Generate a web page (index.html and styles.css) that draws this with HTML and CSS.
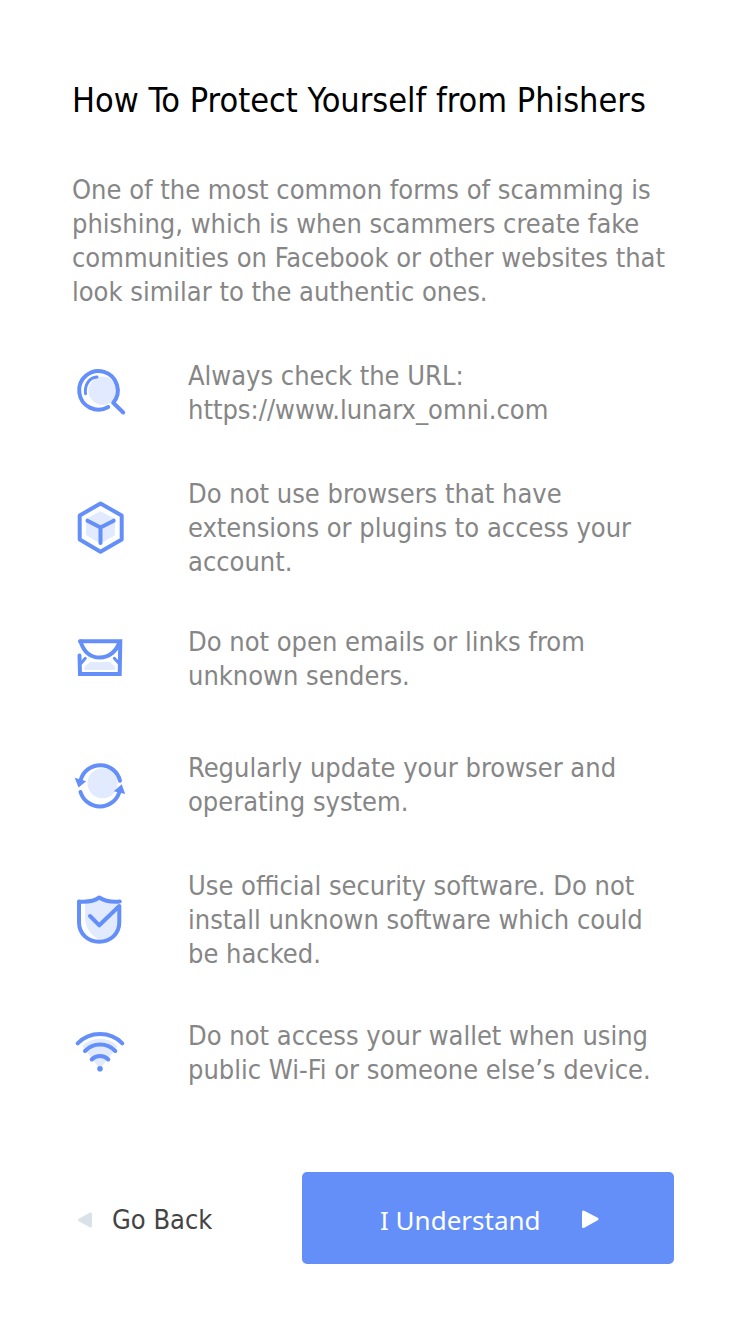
FILE: index.html
```html
<!DOCTYPE html>
<html lang="en">
<head>
<meta charset="utf-8">
<meta name="viewport" content="width=device-width, initial-scale=1">
<title>How To Protect Yourself from Phishers</title>
<link rel="stylesheet" href="styles.css">
</head>
<body>
<main class="page">
  <h1 class="title">How To Protect Yourself from Phishers</h1>
  <p class="intro">One of the most common forms of scamming is phishing, which is when scammers create fake communities on Facebook or other websites that look similar to the authentic ones.</p>

  <ul class="tips">
    <li class="tip">
      <svg class="icon" viewBox="0 0 56 56" aria-hidden="true">
        <circle class="tint" cx="30.7" cy="25.7" r="14.2"/>
        <path d="M36.200 42A19.300 19.300 0 1 1 41.200 37.800M41.200 37.800 51.200 47.500"/>
        <path class="thin" d="M13.500 28.700C12.500 20 17 12.600 25 12"/>
      </svg>
      <p class="tip-text">Always check the URL:<br>https://www.lunarx_omni.com</p>
    </li>
    <li class="tip">
      <svg class="icon" viewBox="0 0 56 56" aria-hidden="true">
        <path class="tint" d="M28.500 11 43 19v16l-14.500 8.700L14 35V19z"/>
        <path d="M28.500 3.500 49.700 15.500v24L28.500 51.800 7.700 39.500v-24z"/>
        <path d="M15.500 20.700 28.500 27.500 41.700 20.700M28.500 27.500V43"/>
      </svg>
      <p class="tip-text">Do not use browsers that have extensions or plugins to access your account.</p>
    </li>
    <li class="tip tip--near">
      <svg class="icon" viewBox="0 0 56 56" aria-hidden="true">
        <path class="tint" d="M18 31h20l5.300 5v3h-31v-3z"/>
        <path class="square" d="M7.500 24.500 8 43H47.700L48.300 10.300H8"/>
        <path d="M8.500 10.500C11.500 20 18 26.500 27.700 26.500S44.500 20 47.500 11"/>
        <path class="thin" d="M13.300 27.300 9.300 32M42.300 27.300 46.700 32"/>
      </svg>
      <p class="tip-text">Do not open emails or links from unknown senders.</p>
    </li>
    <li class="tip tip--far">
      <svg class="icon" viewBox="0 0 56 56" aria-hidden="true">
        <circle class="tint" cx="30.500" cy="26.300" r="15"/>
        <path d="M8.700 23A20.300 20.300 0 0 1 48 23.700M8.500 35A20.300 20.300 0 0 0 47.400 35"/>
        <path class="solid" d="M2.700 20.700 14.200 24.300 6.500 30.500zM49.700 27.300 53.200 37 41.800 34.300z"/>
      </svg>
      <p class="tip-text">Regularly update your browser and operating system.</p>
    </li>
    <li class="tip">
      <svg class="icon" viewBox="0 0 56 56" aria-hidden="true">
        <path class="tint" d="M13 11 28 6l19 5v20c0 10-8 17-18 18C18 43 13.500 36 13 26z"/>
        <path d="M47.800 9.500C40 10.200 33 9.200 27.300 5.500 22 9.200 15 10.200 7 9.500V30C7 42 16 49.700 27.200 49.700S47.300 42 47.300 30V14L27.300 33.300 18 24"/>
      </svg>
      <p class="tip-text">Use official security software. Do not install unknown software which could be hacked.</p>
    </li>
    <li class="tip">
      <svg class="icon" viewBox="0 0 56 56" aria-hidden="true">
        <path class="tint" d="M10.300 21A25 25 0 0 1 45.700 21L28 44z"/>
        <path d="M5.700 18.300A31.400 31.400 0 0 1 50.300 18.300M13 26A21 21 0 0 1 43.300 26M19.700 34.500A11.500 11.500 0 0 1 36.300 34.500"/>
        <circle class="solid" cx="28" cy="43.700" r="2.800"/>
      </svg>
      <p class="tip-text">Do not access your wallet when using public Wi-Fi or someone else’s device.</p>
    </li>
  </ul>

  <footer class="actions">
    <button class="button back" type="button">
      <svg class="arrow" viewBox="0 0 20 20" aria-hidden="true"><path d="M5.500 10 16.500 4v12z"/></svg>
      Go Back
    </button>
    <button class="button confirm" type="button">
      I Understand
      <svg class="arrow" viewBox="0 0 20 20" aria-hidden="true"><path d="M3.500 2 17 9 3.500 16.500z"/></svg>
    </button>
  </footer>
</main>
</body>
</html>
```
FILE: styles.css
```css
* {
  box-sizing: border-box;
}

body {
  margin: 0;
  background: #fff;
  color: #868686;
  font-family: Tahoma, "DejaVu Sans Condensed", "Noto Sans", sans-serif;
  font-size: 27px;
  line-height: 34px;
}

.page {
  padding: 78px 76px 70px 72px;
}

.title {
  margin: 0 0 51px;
  color: #000;
  font-size: 34px;
  font-weight: 400;
  line-height: 44px;
}

.intro {
  margin: 0 0 50px;
}

.tips {
  margin: 0;
  padding: 0;
  list-style: none;
}

.tip {
  display: grid;
  grid-template-columns: 56px 1fr;
  column-gap: 60px;
  align-items: center;
}

.tip + .tip {
  margin-top: 50px;
}

.tip + .tip--near {
  margin-top: 46px;
}

.tip + .tip--far {
  margin-top: 58px;
}

.tip:last-child {
  margin-top: 48px;
}

.tip-text {
  margin: 0;
}

.icon {
  width: 56px;
  height: 56px;
  fill: none;
  stroke: #648ff9;
  stroke-width: 4;
  stroke-linecap: round;
  stroke-linejoin: round;
}

.icon .thin {
  stroke-width: 3;
}

.icon .square {
  stroke-linejoin: miter;
}

.icon .tint {
  fill: #e2eaff;
  stroke: none;
}

.icon .solid {
  fill: #648ff9;
  stroke: none;
}

.actions {
  display: grid;
  grid-template-columns: 1fr 372px;
  margin-top: 85px;
}

.button {
  display: flex;
  align-items: center;
  height: 92px;
  padding: 4px 0 0;
  border: 0;
  border-radius: 5px;
  background: none;
  font: inherit;
  cursor: pointer;
}

.back {
  gap: 18px;
  padding-left: 2px;
  color: #444;
}

.confirm {
  gap: 39px;
  padding-left: 78px;
  background: #648ff9;
  color: #fff;
  font-family: "Noto Sans", Tahoma, sans-serif;
  font-size: 26px;
}

.arrow {
  width: 20px;
  height: 20px;
  fill: currentColor;
  stroke: currentColor;
  stroke-width: 3;
  stroke-linejoin: round;
}

.back .arrow {
  color: #d9e1e9;
}
```
